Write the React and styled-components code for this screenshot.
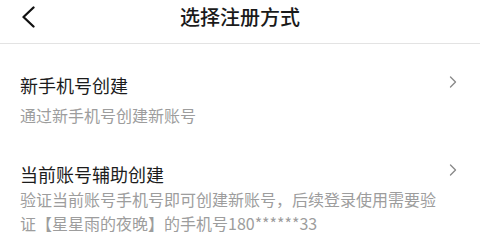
import styled, { createGlobalStyle } from "styled-components";

const GlobalStyle = createGlobalStyle`
    body {
        margin: 0;
        background: #ffffff;
        font-family: "Noto Sans CJK SC", "Noto Sans", sans-serif;
    }
`

const Page = styled.div`
    width: 480px;
    height: 240px;
    overflow: hidden;
    background: #ffffff;
`

const Header = styled.header`
    height: 44px;
    box-sizing: border-box;
    padding-top: 4px;
    border-bottom: 1px solid #e3e3e3;
    display: grid;
    grid-template-columns: 1fr auto 1fr;
    align-items: start;
`

const BackButton = styled.button`
    justify-self: start;
    margin: 2px 0 0 21px;
    padding: 0;
    border: none;
    background: none;
    height: 22px;
    display: flex;
`

const Title = styled.h1`
    margin: 0;
    font-size: 20px;
    line-height: 26px;
    font-weight: 500;
    color: #1a1a1a;
`

const List = styled.div`
    padding-top: 28px;
    display: flex;
    flex-direction: column;
    gap: 34px;
`

const Row = styled.div`
    display: flex;
    align-items: flex-start;
    padding: 0 23px 0 20px;
    gap: 10px;
`

const Texts = styled.div`
    flex: 1;
    display: flex;
    flex-direction: column;
    gap: ${p => p.gap}px;
`

const RowTitle = styled.div`
    font-size: 18px;
    line-height: 26px;
    font-weight: 400;
    color: #1c1c1c;
`

const RowDesc = styled.div`
    font-size: 16px;
    line-height: 24px;
    color: #9d9d9d;
`

const Arrow = styled.svg`
    flex: none;
    margin-top: ${p => p.top}px;
`

const Chevron = ({ top }) => <Arrow top={top} width="8" height="12" viewBox="0 0 8 12">
    <polyline points="1.5,1 6.5,6 1.5,11" fill="none" stroke="#8a8a8a" strokeWidth="1.4" strokeLinecap="round" strokeLinejoin="round" />
</Arrow>

const App = () => {
    return <Page>
        <GlobalStyle />
        <Header>
            <BackButton>
                <svg width="14" height="22" viewBox="0 0 14 22">
                    <polyline points="12.5,1.5 2.5,11 12.5,20.5" fill="none" stroke="#111" strokeWidth="2.3" strokeLinecap="round" strokeLinejoin="round" />
                </svg>
            </BackButton>
            <Title>选择注册方式</Title>
        </Header>
        <List>
            <Row>
                <Texts gap={5}>
                    <RowTitle>新手机号创建</RowTitle>
                    <RowDesc>通过新手机号创建新账号</RowDesc>
                </Texts>
                <Chevron top={4} />
            </Row>
            <Row>
                <Texts gap={0}>
                    <RowTitle>当前账号辅助创建</RowTitle>
                    <RowDesc>
                        验证当前账号手机号即可创建新账号，后续登录使用需要验证【星星雨的夜晚】的手机号180******33
                    </RowDesc>
                </Texts>
                <Chevron top={3} />
            </Row>
        </List>
    </Page>
}

export default App
